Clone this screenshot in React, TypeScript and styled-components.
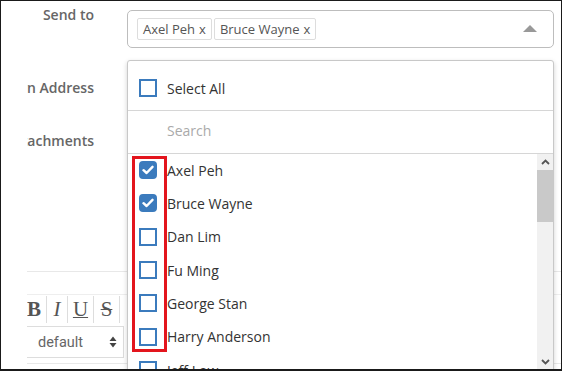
import React from "react";
import styled, { createGlobalStyle } from "styled-components";

const GlobalStyle = createGlobalStyle`
  html, body {
    margin: 0;
    padding: 0;
    background: #fff;
  }
  * {
    box-sizing: border-box;
  }
`;

const Frame = styled.div`
  width: 562px;
  height: 371px;
  border: 1px solid #1a1a1a;
  border-bottom-width: 2px;
  overflow: hidden;
  background: #fff;
  font-family: "Open Sans", "Liberation Sans", sans-serif;
`;

const Clip = styled.div`
  margin-left: 26px;
  width: 534px;
  height: 100%;
  overflow: hidden;
  padding-top: 6px;
`;

const Row = styled.div<{ $top?: number; $height?: number }>`
  display: grid;
  grid-template-columns: 67px 427px;
  column-gap: 33px;
  margin-top: ${(p) => p.$top ?? 0}px;
  min-height: ${(p) => p.$height ?? 0}px;
`;

const Label = styled.div<{ $offset?: number }>`
  display: flex;
  justify-content: flex-end;
  white-space: nowrap;
  margin-top: ${(p) => p.$offset ?? 0}px;
  font-size: 14px;
  line-height: 20px;
  font-weight: 600;
  color: #666;
`;

const Field = styled.div`
  position: relative;
`;

const SelectBox = styled.div`
  margin-top: 3px;
  height: 38px;
  border: 1px solid #bdbdbd;
  border-radius: 5px;
  display: flex;
  align-items: center;
  padding: 0 16px 0 9px;
  gap: 2px;
`;

const Tag = styled.span`
  height: 22px;
  border: 1px solid #ddd;
  border-radius: 2px;
  padding: 0 5px;
  font-size: 13px;
  line-height: 20px;
  color: #555;
  white-space: nowrap;
`;

const TagRemove = styled.span`
  margin-left: 4px;
`;

const Caret = styled.span`
  margin-left: auto;
  margin-top: -2px;
  width: 0;
  height: 0;
  border-left: 7px solid transparent;
  border-right: 7px solid transparent;
  border-bottom: 7px solid #999;
`;

const Input = styled.div`
  height: 34px;
  border: 1px solid #ccc;
  border-radius: 4px;
`;

const Dropdown = styled.div`
  position: absolute;
  top: calc(100% + 12px);
  left: 0;
  width: 427px;
  height: 311px;
  border: 1px solid #c8c8c8;
  border-radius: 3px 3px 0 0;
  background: #fff;
  box-shadow: 0 2px 5px rgba(0, 0, 0, 0.18);
  z-index: 10;
  display: flex;
  flex-direction: column;
`;

const SelectAllRow = styled.div`
  height: 50px;
  border-bottom: 1px solid #d6d6d6;
  display: flex;
  align-items: center;
  gap: 10px;
  padding: 5px 0 0 11px;
  font-size: 14px;
  color: #333;
`;

const SearchRow = styled.div`
  height: 43px;
  border-bottom: 1px solid #d6d6d6;
  display: flex;
  align-items: center;
  padding: 0 0 4px 39px;
  font-size: 14px;
  color: #aaa;
`;

const ListArea = styled.div`
  flex: 1;
  display: flex;
  min-height: 0;
`;

const List = styled.ul`
  flex: 1;
  list-style: none;
  margin: 0;
  padding: 0;
  overflow: hidden;
`;

const Item = styled.li`
  height: 33.33px;
  display: flex;
  align-items: center;
  gap: 10px;
  padding: 0 0 1px 11px;
  font-size: 14px;
  color: #333;
  white-space: nowrap;
`;

const Box = styled.span<{ $checked?: boolean }>`
  flex: none;
  width: 18px;
  height: 18px;
  display: flex;
  align-items: center;
  justify-content: center;
  border: 2px solid #3b7bbd;
  border-radius: ${(p) => (p.$checked ? "4px" : "0")};
  background: ${(p) => (p.$checked ? "#3b7bbd" : "#fff")};
`;

const ScrollTrack = styled.div`
  width: 16px;
  background: #f1f1f1;
  display: flex;
  flex-direction: column;
  align-items: stretch;
`;

const ScrollButton = styled.div`
  height: 16px;
  display: flex;
  align-items: center;
  justify-content: center;
`;

const Thumb = styled.div`
  height: 52px;
  background: #c9c9c9;
`;

const ScrollRest = styled.div`
  flex: 1;
`;

const Highlight = styled.div`
  position: absolute;
  left: 4px;
  top: 95px;
  width: 35px;
  height: 196px;
  border: 3px solid #e3151d;
  pointer-events: none;
`;

const Editor = styled.div`
  border-top: 1px solid #e8e8e8;
  padding-top: 22px;
  width: 540px;
`;

const Toolbar = styled.div`
  display: flex;
  border-top: 1px solid #eee;
  padding-top: 1px;
`;

const ToolButton = styled.span<{ $style: "b" | "i" | "u" | "s"; $w: number }>`
  width: ${(p) => p.$w}px;
  height: 27px;
  border-right: 1px solid #ddd;
  text-align: ${(p) => (p.$style === "b" ? "left" : "center")};
  font-family: "Liberation Serif", "Times New Roman", serif;
  font-size: 21px;
  line-height: 27px;
  color: #555;
  font-weight: ${(p) => (p.$style === "b" ? 700 : 400)};
  font-style: ${(p) => (p.$style === "i" ? "italic" : "normal")};
  text-decoration: ${(p) =>
    p.$style === "u" ? "underline" : p.$style === "s" ? "line-through" : "none"};
  text-decoration-thickness: 1px;
`;

const FontSelect = styled.div`
  margin-top: 3px;
  width: 97px;
  height: 32px;
  border: 1px solid #ddd;
  border-left: none;
  display: flex;
  align-items: center;
  justify-content: space-between;
  padding: 0 6px 0 11px;
  font-family: Roboto, "Open Sans", sans-serif;
  font-size: 14.5px;
  color: #666;
`;

const EditorBottom = styled.div`
  margin-top: 5px;
  border-top: 1px solid #e8e8e8;
`;

const Check = () => (
  <svg width="12" height="10" viewBox="0 0 12 10">
    <path d="M1.5 5.2 L4.6 8 L10.5 1.8" fill="none" stroke="#fff" strokeWidth="2.4" strokeLinecap="round" strokeLinejoin="round" />
  </svg>
);

const Chevron = ({ up }: { up?: boolean }) => (
  <svg width="9" height="6" viewBox="0 0 9 6">
    <path d={up ? "M1 5 L4.5 1.5 L8 5" : "M1 1 L4.5 4.5 L8 1"} fill="none" stroke="#555" strokeWidth="1.8" />
  </svg>
);

const UpDown = () => (
  <svg width="8" height="12" viewBox="0 0 8 12">
    <path d="M4 0.5 L7.5 5 H0.5 Z M4 11.5 L7.5 7 H0.5 Z" fill="#444" />
  </svg>
);

const people = [
  { name: "Axel Peh", checked: true },
  { name: "Bruce Wayne", checked: true },
  { name: "Dan Lim", checked: false },
  { name: "Fu Ming", checked: false },
  { name: "George Stan", checked: false },
  { name: "Harry Anderson", checked: false },
  { name: "Jeff Low", checked: false },
  { name: "Kevin Tan", checked: false },
];

const App = () => {
  return (
    <>
      <GlobalStyle />
      <Frame>
        <Clip>
          <Row>
            <Label $offset={-2}>Send to</Label>
            <Field>
              <SelectBox>
                <Tag>
                  Axel Peh<TagRemove>x</TagRemove>
                </Tag>
                <Tag>
                  Bruce Wayne<TagRemove>x</TagRemove>
                </Tag>
                <Caret />
              </SelectBox>
              <Dropdown>
                <SelectAllRow>
                  <Box />
                  Select All
                </SelectAllRow>
                <SearchRow>Search</SearchRow>
                <ListArea>
                  <List>
                    {people.map((p) => (
                      <Item key={p.name}>
                        <Box $checked={p.checked}>{p.checked && <Check />}</Box>
                        {p.name}
                      </Item>
                    ))}
                  </List>
                  <ScrollTrack>
                    <ScrollButton>
                      <Chevron up />
                    </ScrollButton>
                    <Thumb />
                    <ScrollRest />
                    <ScrollButton>
                      <Chevron />
                    </ScrollButton>
                  </ScrollTrack>
                </ListArea>
                <Highlight />
              </Dropdown>
            </Field>
          </Row>
          <Row $top={26}>
            <Label $offset={4}>Return Address</Label>
            <Input />
          </Row>
          <Row $top={18} $height={145}>
            <Label $offset={5}>Attachments</Label>
            <div />
          </Row>
          <Editor>
            <Toolbar>
              <ToolButton $style="b" $w={20}>B</ToolButton>
              <ToolButton $style="i" $w={21}>I</ToolButton>
              <ToolButton $style="u" $w={26}>U</ToolButton>
              <ToolButton $style="s" $w={26}>S</ToolButton>
            </Toolbar>
            <FontSelect>
              default
              <UpDown />
            </FontSelect>
            <EditorBottom />
          </Editor>
        </Clip>
      </Frame>
    </>
  );
};

export default App;
